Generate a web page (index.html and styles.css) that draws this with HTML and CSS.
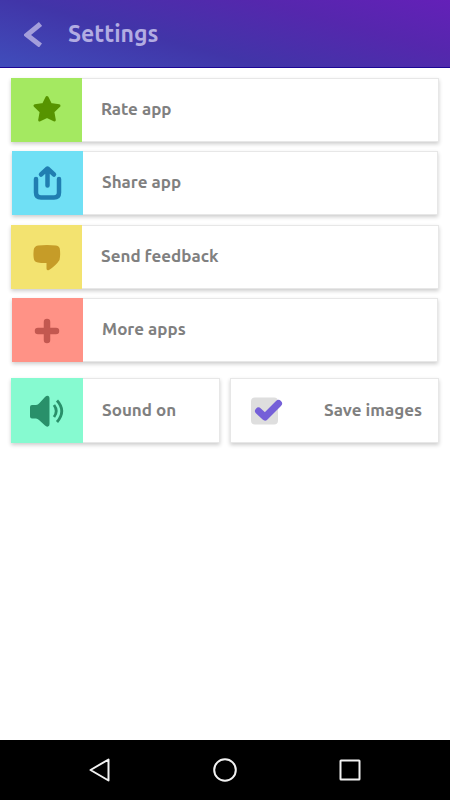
FILE: index.html
```html
<!DOCTYPE html>
<html lang="en">
<head>
<meta charset="utf-8">
<meta name="viewport" content="width=device-width, initial-scale=1">
<title>Settings</title>
<link rel="stylesheet" href="styles.css">
</head>
<body>
<header class="bar">
  <button class="back" type="button" aria-label="Back">
    <svg width="18" height="26" viewBox="0 0 18 26"><path d="M16.5 3L3 14L16.5 24.500" fill="none" stroke="currentColor" stroke-width="5"/></svg>
  </button>
  <h1 class="title">Settings</h1>
</header>
<main class="content">
  <div class="list">
    <button class="card" type="button">
      <span class="tile rate"><svg width="30" height="30" viewBox="0 0 30 30"><path d="M15 2.500L18.500 9.500L27 10.700L20.800 16.600L22.300 25L15 21.400L7.700 25L9.200 16.600L3 10.700L11.500 9.500Z" fill="currentColor" stroke="currentColor" stroke-width="3" stroke-linejoin="round"/></svg></span>
      <span class="label">Rate app</span>
    </button>
    <button class="card inset" type="button">
      <span class="tile share"><svg width="30" height="36" viewBox="0 0 30 36"><g fill="none" stroke="currentColor" stroke-width="4.500" stroke-linecap="round" stroke-linejoin="round"><path d="M3 14V27.500Q3 32.500 8 32.500H21Q26 32.500 26 27.500V14"/><path d="M14.500 20.500V4M8 9.500L14.500 3.500L21 9.500"/></g></svg></span>
      <span class="label">Share app</span>
    </button>
    <button class="card" type="button">
      <span class="tile feedback"><svg width="30" height="30" viewBox="0 0 30 30"><path d="M6 3.500Q15 2.300 24 3.500Q28 4 28 8.500Q28.500 13.500 27.500 18Q24 23.500 17 28Q14.500 29 14.500 26.500V21Q10 21.200 6 20.500Q2 20 1.700 16Q1.200 12.500 1.700 8Q2.200 4 6 3.500Z" fill="currentColor"/></svg></span>
      <span class="label">Send feedback</span>
    </button>
    <button class="card inset" type="button">
      <span class="tile more"><svg width="30" height="30" viewBox="0 0 30 30"><path d="M14 7V25M5 16H23" stroke="currentColor" stroke-width="6.500" stroke-linecap="round"/></svg></span>
      <span class="label">More apps</span>
    </button>
  </div>
  <div class="pair">
    <button class="card" type="button">
      <span class="tile sound"><svg width="36" height="34" viewBox="0 0 36 34"><path d="M3 11H7Q9 11 10.500 9L16 3Q18 1 19.500 2Q20.500 2.500 20.500 4.500V30Q20.500 32 19 32.500Q17.500 33 16 31.500L10 26Q8.500 24.500 7 24.500H3Q1 24.500 1 22.500V13Q1 11 3 11Z" fill="currentColor"/><path d="M25 11Q29.500 17 25 23M28 6.500Q37.500 17 28 28" fill="none" stroke="currentColor" stroke-width="2.800"/></svg></span>
      <span class="label">Sound on</span>
    </button>
    <label class="card save">
      <input class="check" type="checkbox" checked>
      <span class="box"><svg width="36" height="30" viewBox="0 0 36 30"><rect x="1" y="1.500" width="27" height="27" rx="4" fill="#dedede"/><path class="tick" d="M8.500 15L15 21L28.500 7.500" fill="none" stroke="#7560d8" stroke-width="7" stroke-linecap="round" stroke-linejoin="round"/></svg></span>
      <span class="save-text">Save images</span>
    </label>
  </div>
</main>
<nav class="system" aria-label="System">
  <button type="button" aria-label="Back"><svg width="26" height="26" viewBox="0 0 26 26"><path d="M21.500 2.500V23.500L3.500 13Z"/></svg></button>
  <button type="button" aria-label="Home"><svg width="26" height="26" viewBox="0 0 26 26"><circle cx="13" cy="13" r="10.800"/></svg></button>
  <button type="button" aria-label="Recent apps"><svg width="26" height="26" viewBox="0 0 26 26"><rect x="3.500" y="3.500" width="19" height="19" rx=".5"/></svg></button>
</nav>
</body>
</html>
```
FILE: styles.css
```css
* {
  box-sizing: border-box;
}

body {
  margin: 0;
  min-height: 100vh;
  display: flex;
  flex-direction: column;
  background: #fff;
  font-family: Ubuntu, "Noto Sans", sans-serif;
}

button {
  margin: 0;
  padding: 0;
  border: 0;
  background: none;
  font: inherit;
  cursor: pointer;
}

svg {
  display: block;
}

.bar {
  display: flex;
  align-items: center;
  gap: 26px;
  height: 68px;
  padding: 0 24px;
  border-bottom: 1px solid #1d0796;
  background: linear-gradient(15deg, #404dbb 0%, #4135a8 38%, #5527ad 72%, #6420b8 100%);
}

.back {
  color: #a49edb;
}

.title {
  margin: 0;
  color: #b2ace2;
  font-size: 23px;
  line-height: 28px;
  font-weight: 700;
}

.content {
  flex: 1;
  padding: 10px 11px;
}

.list {
  display: flex;
  flex-direction: column;
  gap: 9px;
}

.card {
  display: flex;
  align-items: stretch;
  height: 64px;
  background: #fff;
  box-shadow: 0 0 0 1px #e7e7e7 inset, 0 2px 4px rgba(0, 0, 0, .2);
  color: #808080;
  font-size: 17px;
  line-height: 24px;
  font-weight: 700;
  text-align: left;
}

.inset {
  margin: 0 1px 1px;
}

.tile {
  display: flex;
  flex: none;
  align-items: center;
  justify-content: center;
  width: 71px;
}

.label {
  align-self: center;
  padding: 0 0 2px 19px;
}

.rate {
  background: #a4e961;
  color: #579400;
}

.share {
  background: #70e0f5;
  color: #207eb1;
}

.feedback {
  background: #f3e370;
  color: #c69c28;
}

.more {
  background: #ff9286;
  color: #c35850;
}

.sound {
  background: #86fad0;
  color: #29906a;
}

.pair {
  display: grid;
  grid-template-columns: 1fr 1fr;
  gap: 10px;
  margin-top: 15px;
}

.pair .card {
  height: 65px;
}

.pair .tile {
  width: 72px;
}

.save {
  position: relative;
  align-items: center;
  justify-content: space-between;
  padding: 0 17px 0 20px;
  cursor: pointer;
}

.save-text {
  padding-bottom: 2px;
}

.check {
  position: absolute;
  inset: 0;
  width: 100%;
  height: 100%;
  margin: 0;
  opacity: 0;
}

.check:not(:checked) + .box .tick {
  display: none;
}

.system {
  display: flex;
  align-items: center;
  justify-content: center;
  gap: 99px;
  height: 60px;
  background: #000;
}

.system svg {
  fill: none;
  stroke: #f2f2f2;
  stroke-width: 2;
  stroke-linejoin: round;
}
```
